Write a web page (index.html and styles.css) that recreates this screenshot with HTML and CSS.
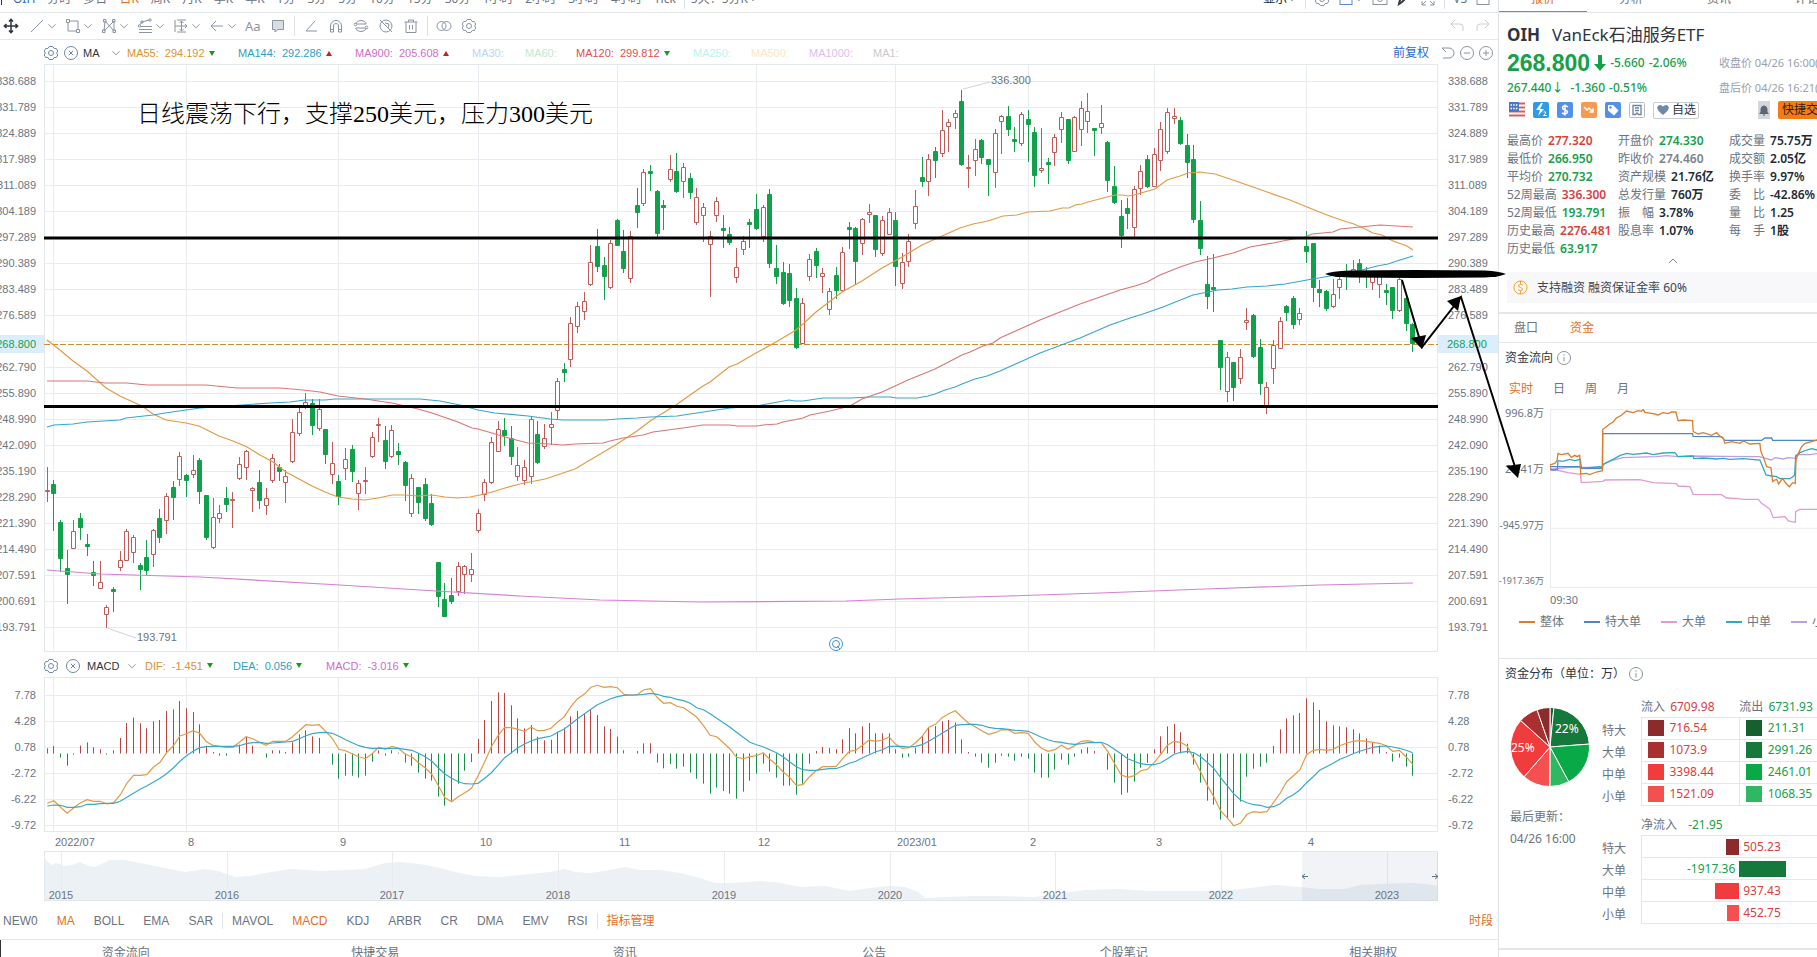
FILE: index.html
```html
<!DOCTYPE html>
<html lang="zh-CN">
<head>
<meta charset="utf-8">
<title>OIH VanEck石油服务ETF</title>
<link rel="stylesheet" href="styles.css">
</head>
<body>
<svg class="defs" width="0" height="0" aria-hidden="true">
  <symbol id="chev" viewBox="0 0 10 10"><path d="M1.500 3.300 5 6.800 8.500 3.300"/></symbol>
  <symbol id="hex" viewBox="0 0 16 16"><path d="M6.200 1.500h3.600l1.400 2h2.100l1.400 2.500-1 2 1 2-1.400 2.500h-2.100l-1.400 2H6.200l-1.400-2H2.700L1.300 10l1-2-1-2 1.400-2.500h2.100z"/><circle cx="8" cy="8" r="2.500"/></symbol>
  <symbol id="close" viewBox="0 0 16 16"><circle cx="8" cy="8" r="6.500"/><path d="M5.800 5.800l4.400 4.400M10.200 5.800l-4.400 4.400"/></symbol>
  <symbol id="info" viewBox="0 0 16 16"><circle cx="8" cy="8" r="6.500"/><path d="M8 7v4.500M8 4.300v1.400"/></symbol>
</svg>
<div class="app">
<main class="main">
  <header class="topbar">
    <span class="edge"></span>
    <button class="sym">OIH</button><button>分时</button><button>多日</button><button class="on">日K</button><button>周K</button><button>月K</button><button>季K</button><button>年K</button><button>1分</button><button>3分</button><button>5分</button><button>10分</button><button>15分</button><button>30分</button><button>1小时</button><button>2小时</button><button>3小时</button><button>4小时</button><button>Tick</button><i class="sep"></i><button>5天：5分K <svg class="ic chev"><use href="#chev"/></svg></button>
    <div class="topright">
      <button class="dark">显示 <svg class="ic chev"><use href="#chev"/></svg></button><i class="sep"></i>
      <button aria-label="设置"><svg class="ic"><use href="#hex"/></svg></button>
      <button aria-label="布局"><svg class="ic blue" viewBox="0 0 16 16"><rect x="2" y="2" width="12" height="11.500"/></svg><svg class="ic chev"><use href="#chev"/></svg></button>
      <button aria-label="截图"><svg class="ic" viewBox="0 0 16 16"><rect x="1" y="3" width="14" height="10.500"/><circle cx="8" cy="8" r="2.500"/></svg></button>
      <button aria-label="画线"><svg class="ic inkic" viewBox="0 0 16 16"><path d="M3 13l1-4 7-7 2 2-7 7z"/></svg></button>
      <button aria-label="全屏"><svg class="ic" viewBox="0 0 16 16"><path d="M2 6V2h4M10 2h4v4M2 10v4h4M2 14l4-4M14 10v4h-4M14 14l-4-4"/></svg></button><i class="sep"></i>
      <button>VS</button>
      <button aria-label="侧栏"><svg class="ic" viewBox="0 0 16 16"><rect x="2" y="2" width="12" height="11.500"/><path d="M9 2v5h5"/></svg></button>
    </div>
  </header>

  <nav class="tools" aria-label="画图工具">
    <button aria-label="移动"><svg class="ic move" viewBox="0 0 16 16"><path d="M8 1.500v13M1.500 8h13M6 3.500l2-2.200 2 2.200M6 12.500l2 2.200 2-2.200M3.500 6 1.300 8l2.200 2M12.500 6l2.200 2-2.200 2"/></svg></button>
    <div class="pairs">
      <button aria-label="直线"><svg class="ic" viewBox="0 0 16 16"><path d="M2 14 14 2"/></svg><svg class="ic chev"><use href="#chev"/></svg></button>
      <button aria-label="矩形"><svg class="ic" viewBox="0 0 16 16"><path d="M4.500 3h8.500v8.500M11.500 13H3V4.500"/><path d="M1.500 1.500h3v3h-3zM11.500 11.500h3v3h-3z"/></svg><svg class="ic chev"><use href="#chev"/></svg></button>
      <button aria-label="形态"><svg class="ic" viewBox="0 0 16 16"><path d="M3 13 4 3l9 10V3L3 13"/><path d="M1.500 12h2.500v2.500H1.500zM2.500 1.500H5V4H2.500zM11.500 1.500H14V4h-2.500zM12 12h2.500v2.500H12z"/></svg><svg class="ic chev"><use href="#chev"/></svg></button>
      <button aria-label="斐波那契"><svg class="ic" viewBox="0 0 16 16"><path d="M2 14.500h13M2 11.500h13M4 8.500h11M2.500 7 5 4l7-2"/><circle cx="2.500" cy="8" r="1.200"/><circle cx="5" cy="4" r="1.200"/><circle cx="13" cy="2" r="1.200"/></svg><svg class="ic chev"><use href="#chev"/></svg></button>
      <button aria-label="区间"><svg class="ic" viewBox="0 0 16 16"><path d="M2 2v12M4 2h9M4 14h9M8.500 3v10M2 8h12M6.500 5l2-2 2 2M6.500 11l2 2 2-2M12 6l2 2-2 2"/></svg><svg class="ic chev"><use href="#chev"/></svg></button>
      <button aria-label="箭头"><svg class="ic" viewBox="0 0 16 16"><path d="M14 8H2M7 3 2 8l5 5"/></svg><svg class="ic chev"><use href="#chev"/></svg></button>
    </div>
    <div class="singles">
      <button class="aa">Aa</button>
      <button aria-label="批注"><svg class="ic fill" viewBox="0 0 16 16"><path d="M2.500 2.500h11v9H8L5 14v-2.500H2.500z"/></svg></button>
      <i class="sep"></i>
      <button aria-label="角度"><svg class="ic" viewBox="0 0 16 16"><path d="M12 3 3 13h11"/></svg></button>
      <button aria-label="磁铁"><svg class="ic" viewBox="0 0 16 16"><path d="M2.500 14V8a5.500 5.500 0 0 1 11 0v6h-3V8a2.500 2.500 0 0 0-5 0v6zM2.500 11.500h3M10.500 11.500h3"/></svg></button>
      <button aria-label="连续画线"><svg class="ic" viewBox="0 0 16 16"><path d="M2.500 6a6 6 0 0 1 11 0M2.500 10a6 6 0 0 0 11 0"/><path d="M4 6h9M3 10h9"/><circle cx="2.500" cy="6.500" r="1.300"/><circle cx="13.500" cy="9.500" r="1.300"/></svg></button>
      <button aria-label="隐藏"><svg class="ic" viewBox="0 0 16 16"><circle cx="8" cy="8" r="6"/><path d="M2 2l12 12M7 5l4 1-1 4"/></svg></button>
      <button aria-label="删除"><svg class="ic" viewBox="0 0 16 16"><path d="M1.500 4h13M5.500 4V2h5v2M3 4v10.500h10V4M6.500 7v4.500M9.500 7v4.500"/></svg></button>
      <i class="sep"></i>
      <button aria-label="叠加"><svg class="ic" viewBox="0 0 16 16"><circle cx="5.500" cy="8" r="4.500"/><circle cx="10.500" cy="8" r="4.500"/></svg></button>
      <button aria-label="画图设置"><svg class="ic"><use href="#hex"/></svg></button>
    </div>
    <div class="undo">
      <button aria-label="撤销"><svg class="ic" viewBox="0 0 16 16"><path d="M6 2 2 6l4 4M2 6h9q3 0 3 3v4"/></svg></button>
      <button aria-label="重做"><svg class="ic" viewBox="0 0 16 16"><path d="M10 2l4 4-4 4M14 6H5Q2 6 2 9v4"/></svg></button>
    </div>
  </nav>

  <section class="legend ma">
    <div class="who"><svg class="ic"><use href="#hex"/></svg><svg class="ic"><use href="#close"/></svg><span>MA</span><svg class="ic chev"><use href="#chev"/></svg></div>
    <span class="c55">MA55:<b>294.192</b><i class="dn"></i></span><span class="c144">MA144:<b>292.286</b><i class="up"></i></span><span class="c900">MA900:<b>205.608</b><i class="up"></i></span><span class="c30">MA30:</span><span class="c60">MA60:</span><span class="c120">MA120:<b>299.812</b><i class="dn"></i></span><span class="c250">MA250:</span><span class="c500">MA500:</span><span class="c1000">MA1000:</span><span class="c1">MA1:</span>
    <div class="adj"><button class="link">前复权</button><button aria-label="重置"><svg class="ic" viewBox="0 0 16 16"><path d="M2 3h7a5 5 0 0 1 0 10H3M2 3l4 4"/></svg></button><button aria-label="缩小"><svg class="ic" viewBox="0 0 16 16"><circle cx="8" cy="8" r="6.500"/><path d="M5 8h6"/></svg></button><button aria-label="放大"><svg class="ic" viewBox="0 0 16 16"><circle cx="8" cy="8" r="6.500"/><path d="M5 8h6M8 5v6"/></svg></button></div>
  </section>

  <section class="row price">
    <ul class="axis left" data-axis="price"></ul>
    <div class="pane">
      <svg id="price" viewBox="44 64 1394 588" preserveAspectRatio="none"></svg>
      <p class="note">日线震荡下行，支撑250美元，压力300美元</p>
    </div>
    <ul class="axis right" data-axis="price"></ul>
    <span class="tag tl">268.800</span><span class="tag tr">268.800</span>
  </section>

  <section class="legend macd">
    <div class="who"><svg class="ic"><use href="#hex"/></svg><svg class="ic"><use href="#close"/></svg><span>MACD</span><svg class="ic chev"><use href="#chev"/></svg></div>
    <span class="c55">DIF:<b>-1.451</b><i class="dn"></i></span><span class="c144">DEA:<b>0.056</b><i class="dn"></i></span><span class="c900">MACD:<b>-3.016</b><i class="dn"></i></span>
  </section>

  <section class="row osc">
    <ul class="axis left" data-axis="macd"></ul>
    <div class="pane"><svg id="macd" viewBox="44 677 1394 155" preserveAspectRatio="none"></svg></div>
    <ul class="axis right" data-axis="macd"></ul>
  </section>

  <section class="row nav">
    <svg id="nav" viewBox="44 832 1394 69" preserveAspectRatio="none"></svg>
  </section>

  <nav class="indicators" aria-label="指标">
    <button>NEW0</button><button class="on">MA</button><button>BOLL</button><button>EMA</button><button>SAR</button><i class="sep"></i><button>MAVOL</button><button class="on">MACD</button><button>KDJ</button><button>ARBR</button><button>CR</button><button>DMA</button><button>EMV</button><button>RSI</button><i class="sep"></i><button class="on">指标管理</button><button class="on session">时段</button>
  </nav>
  <nav class="bottom"><button>资金流向</button><button>快捷交易</button><button>资讯</button><button>公告</button><button>个股笔记</button><button>相关期权</button></nav>
</main>

<aside class="side">
  <nav class="sidetabs"><button class="on">报价</button><button>分析</button><button>资讯</button><button>评论</button></nav>
  <section class="quote">
    <h1><b>OIH</b><span>VanEck石油服务ETF</span></h1>
    <div class="last g"><b>268.800</b><svg viewBox="0 0 12 16" width="12" height="16"><path d="M4 0h4v9h4l-6 7-6-7h4z"/></svg><span>-5.660</span><span>-2.06%</span><em>收盘价 04/26 16:00(美东)</em></div>
    <div class="after g"><span class="p">267.440↓</span><span>-1.360</span><span>-0.51%</span><em>盘后价 04/26 16:21(美东)</em></div>
    <div class="badges">
      <svg viewBox="0 0 16 16"><rect width="16" height="16" fill="#fff"/><path d="M0 1.500h16M0 5.500h16M0 9.500h16M0 13.500h16" stroke="#d8605c" stroke-width="2"/><rect width="10" height="10" fill="#4a78c8"/><path d="M1.500 3h7M1.500 6.500h7" stroke="#fff" stroke-width="1.500" stroke-dasharray="1.500 1.200"/></svg>
      <svg viewBox="0 0 16 16"><rect width="16" height="16" rx="2" fill="#2e9be8"/><path d="M8 1 3 8h4l-2 6 6-7H7l3-6z" fill="#fff"/><path d="M10.500 10q3-1 2 1.500l-2 2h3.500" fill="none" stroke="#fff"/></svg>
      <svg viewBox="0 0 16 16"><rect width="16" height="16" rx="2" fill="#5590e8"/><path d="M11 5Q8 3 6 4.500 4.500 7 8 8q3.500 1 2 3-2 1.700-5 0M8 2.500v11" fill="none" stroke="#fff" stroke-width="1.500"/></svg>
      <svg viewBox="0 0 16 16"><rect width="16" height="16" rx="2" fill="#f69a50"/><path d="M3 5l3 3 2-2 4 4M12 6.500V10H8.500" fill="none" stroke="#fff" stroke-width="1.500"/></svg>
      <svg viewBox="0 0 16 16"><rect width="16" height="16" rx="2" fill="#5590e8"/><path d="M3 3h5l5.500 5.500-4.500 5L3 8.500z" fill="#fff"/><circle cx="5.500" cy="5.500" r="1.200" fill="#5590e8"/></svg>
      <svg viewBox="0 0 16 16"><rect x=".5" y=".5" width="15" height="15" rx="1" fill="#fff" stroke="#b4bcc8"/><path d="M4 3.500h8v9H9.500L8 11l-1.500 1.500H4zM6 6h4M6 8.500h4" fill="none" stroke="#6f819b" stroke-width="1.300"/></svg>
      <button class="fav"><svg viewBox="0 0 12 12"><path d="M6 11Q-1.500 5.500.7 2.300 3.300-.4 6 2.600 8.700-.4 11.300 2.300 13.500 5.500 6 11z" fill="#6f88a6"/></svg>自选</button>
      <button class="bell" aria-label="提醒"><svg viewBox="0 0 12 12"><path d="M6 .5v1Q9.500 2 9.500 6v2l1.500 2H1l1.500-2V6Q2.500 2 6 1.500zM4.500 10.500h3L6 12z" fill="#5c6675"/></svg></button>
      <button class="trade">快捷交易</button>
    </div>
    <div class="stats">
      <dl><div><dt>最高价</dt><dd class="r">277.320</dd></div><div><dt>最低价</dt><dd class="g">266.950</dd></div><div><dt>平均价</dt><dd class="g">270.732</dd></div><div><dt>52周最高</dt><dd class="r">336.300</dd></div><div><dt>52周最低</dt><dd class="g">193.791</dd></div><div><dt>历史最高</dt><dd class="r">2276.481</dd></div><div><dt>历史最低</dt><dd class="g">63.917</dd></div></dl>
      <dl><div><dt>开盘价</dt><dd class="g">274.330</dd></div><div><dt>昨收价</dt><dd class="n">274.460</dd></div><div><dt>资产规模</dt><dd>21.76亿</dd></div><div><dt>总发行量</dt><dd>760万</dd></div><div><dt>振　幅</dt><dd>3.78%</dd></div><div><dt>股息率</dt><dd>1.07%</dd></div></dl>
      <dl><div><dt>成交量</dt><dd>75.75万</dd></div><div><dt>成交额</dt><dd>2.05亿</dd></div><div><dt>换手率</dt><dd>9.97%</dd></div><div><dt>委　比</dt><dd>-42.86%</dd></div><div><dt>量　比</dt><dd>1.25</dd></div><div><dt>每　手</dt><dd>1股</dd></div></dl>
    </div>
    <button class="fold" aria-label="收起"><svg viewBox="0 0 10 6" width="10" height="6"><path d="M1 5l4-4 4 4"/></svg></button>
    <p class="margin"><svg viewBox="0 0 16 16" width="15" height="15"><circle cx="8" cy="8" r="7"/><path d="M10.500 5.500Q8 4 6 5.500 5.500 7.500 8 8q3 .7 2 2.500-2 1.500-4.500 0M8 1v3.500M8 11.500V15"/></svg>支持融资 融资保证金率 60%</p>
  </section>
  <nav class="subtabs"><button>盘口</button><button class="on">资金</button></nav>
  <section class="flow">
    <h2>资金流向<svg class="ic"><use href="#info"/></svg></h2>
    <div class="periods"><button class="on">实时</button><button>日</button><button>周</button><button>月</button></div>
    <div class="flowchart">
      <ul><li>996.8万</li><li>28.41万</li><li class="small">-945.97万</li><li class="tiny">-1917.36万</li></ul>
      <svg viewBox="181 207 800 537" preserveAspectRatio="none">
        <path class="fg" d="M181 208H981M181 387H981M181 565H981M181 742H981M182 208V742"/>
        <polyline stroke="#e39ad2" points="181,392 200,390 235,398 272,403 275,428 340,424 345,420 450,419 490,428 560,431 565,438 600,440 610,463 695,464 710,474 745,476 760,478 805,478 815,490 830,500 840,508 850,533 885,530 895,543 916,547 917,515 930,508 981,508"/>
        <polyline stroke="#bb9fe6" points="181,388 235,382 330,382 338,380 340,373 370,360 400,353 420,352 500,350 530,347 565,350 600,348 700,349 810,350 820,354 845,360 855,353 880,357 895,353 916,355 917,345 940,343 960,344 981,341"/>
        <polyline stroke="#2fa9c0" points="181,386 190,390 203,388 205,362 220,364 240,358 255,362 272,358 275,385 330,380 338,383 339,375 350,368 370,358 390,347 410,340 430,343 470,339 490,344 520,339 555,338 565,350 610,348 612,356 640,354 680,357 700,355 720,358 760,356 810,360 820,385 828,405 845,408 860,410 870,416 900,416 914,406 917,350 930,338 950,330 965,326 981,330"/>
        <polyline stroke="#4b88c8" points="181,380 275,380 275,385 338,385 339,281 608,281 610,289 695,290 705,301 815,301 825,294 845,294 848,301 981,301"/>
        <polyline stroke="#dd7d2c" points="181,388 181,375 195,370 202,362 205,340 215,344 235,340 245,352 255,346 262,350 270,346 273,402 290,400 300,404 320,396 338,392 339,268 350,260 360,252 370,246 380,234 395,226 410,213 430,218 445,212 455,214 460,208 465,217 490,221 505,225 520,218 535,221 545,216 558,216 565,242 580,240 608,242 610,275 625,282 640,278 665,286 680,278 692,290 700,294 705,310 725,305 750,310 760,303 780,312 810,310 812,330 817,345 820,350 830,380 843,383 848,425 855,420 860,418 866,432 878,415 885,426 890,432 898,440 908,428 916,430 918,360 925,340 935,320 945,310 960,306 970,303 981,300"/>
      </svg>
    </div>
    <p class="time">09:30</p>
    <ul class="flowkey"><li class="k1">整体</li><li class="k2">特大单</li><li class="k3">大单</li><li class="k4">中单</li><li class="k5">小单</li></ul>
  </section>
  <section class="dist">
    <h2>资金分布（单位：万）<svg class="ic"><use href="#info"/></svg></h2>
    <div class="distbody">
      <div class="pie"><svg id="pie" viewBox="-40 -40 80 80" width="80" height="80"></svg><p>最后更新：<br>04/26 16:00</p></div>
      <div class="tables">
        <table>
          <thead><tr><td></td><th>流入 <span class="r">6709.98</span></th><th>流出 <span class="g">6731.93</span></th></tr></thead>
          <tbody>
            <tr><th>特大</th><td class="r"><i class="s1"></i>716.54</td><td class="g"><i class="s5"></i>211.31</td></tr>
            <tr><th>大单</th><td class="r"><i class="s2"></i>1073.9</td><td class="g"><i class="s6"></i>2991.26</td></tr>
            <tr><th>中单</th><td class="r"><i class="s3"></i>3398.44</td><td class="g"><i class="s7"></i>2461.01</td></tr>
            <tr><th>小单</th><td class="r"><i class="s4"></i>1521.09</td><td class="g"><i class="s8"></i>1068.35</td></tr>
          </tbody>
        </table>
        <table class="net">
          <thead><tr><td></td><th colspan="2">净流入 <span class="g">-21.95</span></th></tr></thead>
          <tbody>
            <tr><th>特大</th><td class="neg"><i class="s1" style="width:13px"></i></td><td class="r pos">505.23</td></tr>
            <tr><th>大单</th><td class="neg g"><span>-1917.36</span></td><td class="bar"><i class="s6" style="width:47px"></i></td></tr>
            <tr><th>中单</th><td class="neg"><i class="s3" style="width:24px"></i></td><td class="r pos">937.43</td></tr>
            <tr><th>小单</th><td class="neg"><i class="s4" style="width:12px"></i></td><td class="r pos">452.75</td></tr>
          </tbody>
        </table>
      </div>
    </div>
  </section>
</aside>
<svg class="ink" viewBox="0 0 1817 957" preserveAspectRatio="none" aria-hidden="true">
  <path d="M1325 274Q1331 271 1350 270.500L1415 270 1485 270.500Q1499 271 1506 274 1499 277 1485 277.500L1415 278 1350 277.500Q1331 277 1325 274z"/>
  <path class="l" d="M1402 280 1422 347 1461 297 1516 470"/>
  <path d="M1422 349 1411 338 1426 335zM1461 296 1458 311 1447 301zM1518 478 1506 466 1521 464z"/>
</svg>
</div>
<script src="chart.js"></script>
</body>
</html>
```
FILE: styles.css
```css
*{box-sizing:border-box}
body{margin:0;background:#fff;color:#6b7480;font:12px/18px "Noto Sans","Noto Sans CJK SC",sans-serif;overflow:hidden}
button{all:unset;box-sizing:border-box;cursor:pointer;display:inline-flex;align-items:center;white-space:nowrap}
ul,dl,dd,p,h1,h2{margin:0;padding:0;list-style:none}
.defs{position:absolute}
.app{position:relative;display:flex;height:100vh;overflow:hidden}
.main{flex:1;min-width:0;display:flex;flex-direction:column}
.ic{width:16px;height:16px;flex:none;fill:none;stroke:#8a94a3;stroke-width:1}
.ic.chev{width:10px;height:10px}
.ic.blue{stroke:#5b87c4}
.ic.inkic{stroke:#333a45;stroke-width:2}
.on{color:#e0701e}
.r{color:#d9403c}
.g{color:#16a04a}
.sep{flex:none;width:1px;height:16px;background:#dfe2e7}

.topbar{display:flex;flex:none;align-items:center;gap:12px;height:27px;margin-top:-14px;border-bottom:1px solid #e3e6ea;padding-right:7px}
.edge{width:1px;height:12px;margin-left:1px;margin-right:-13px;background:#333}
.topbar .sym{color:#2b6cc4;margin-left:12px}
.topbar .sep{height:20px;margin:0 -6px 0 -4px}
.topright{display:flex;align-items:center;gap:8px;margin-left:auto}
.topright .sep{margin:0}
.dark{color:#222a35}

.tools{display:flex;flex:none;align-items:center;height:27px;padding:0 7px 0 3px;border-bottom:1px solid #e3e6ea}
.move{stroke:#2d3540;stroke-width:1.5}
.pairs{display:flex;gap:8px;margin:0 8px 0 10px}
.pairs button{gap:2px}
.singles{display:flex;align-items:center;gap:9px}
.singles .sep{height:20px;margin:0 -1px}
.aa{width:16px;font-size:13px;color:#8a94a3}
.fill path{fill:#d8dde3}
.undo{display:flex;gap:10px;margin-left:auto}
.undo .ic{stroke:#c9ced5}

.legend{display:flex;flex:none;align-items:center;height:24px;padding-top:2px;font:11px/16px "Liberation Sans","Noto Sans CJK SC",sans-serif}
.who{display:flex;align-items:center;color:#2d3540;flex:none;padding-left:43px}
.who .ic{stroke:#6f88a6}
.ma .who{width:127px;gap:4px}
.macd .who{width:145px;gap:6px}
.ma .who span{width:24px}
.macd .who span{width:34px}
.who .ic.chev{stroke:#8a94a3}
.legend>span{flex:none;display:flex;align-items:center}
.legend b{font-weight:400;margin-left:6px}
.up,.dn{margin-left:4px;border:3px solid transparent}
.dn{border-top:5px solid #1a9a1a;border-bottom:0}
.up{border-bottom:5px solid #c81e1e;border-top:0}
.c55{color:#e09033;width:111px}
.c144{color:#2d9fc4;width:117px}
.c900{color:#d06ccc;width:117px}
.c30{color:#bcd4f2;width:53px}
.c60{color:#bfe8d2;width:51px}
.c120{color:#e0504c;width:117px}
.c250{color:#baf3ee;width:58px}
.c500{color:#fbe8c4;width:58px}
.c1000{color:#dcc0ec;width:64px}
.c1{color:#c6c9ce}
.macd{height:25px}
.macd .c55{width:88px}
.macd .c144{width:93px}
.adj{display:flex;align-items:center;gap:3px;margin-left:auto;padding-right:4px}
.adj .link{color:#1f6cc9;font-size:12px;margin-right:8px}

.row{display:grid;grid-template:minmax(0,1fr)/44px minmax(0,1fr) 60px;flex:none;position:relative}
.row svg{display:block;width:100%;height:100%}
.price{height:588px}
.osc{height:155px}
.nav{height:69px}
.nav svg{grid-column:2}
.pane{position:relative;min-height:0}
.axis{font:11px/26px "Liberation Sans",sans-serif;color:#6b7480;padding-top:4px}
.axis li{display:flex;height:26px}
.left li{justify-content:flex-end;padding-right:8px}
.right li{padding-left:10px}
.osc .axis{padding-top:5px}
.tag{position:absolute;top:271px;height:18px;background:#dceefc;color:#12a050;font:11px/18px "Liberation Sans",sans-serif;display:flex}
.tl{left:0;width:44px;justify-content:flex-end;padding-right:8px}
.tr{right:0;width:60px;padding-left:9px}
.note{position:absolute;left:93px;top:33px;font:300 24px/34px "Liberation Serif","Noto Sans CJK SC",serif;color:#000;white-space:nowrap}
.grid{stroke:#e8ecf0;fill:none}
.frame{stroke:#e3e8ec;fill:none}
.cr{stroke:#c05a58;fill:#fff}
.cg{stroke:#12a14b;fill:#12a14b}
.line{fill:none;stroke-width:1.2}
svg text{font:11px "Liberation Sans",sans-serif;fill:#6b7480}
.key{fill:none;stroke:#000;stroke-width:3}

.indicators{display:flex;flex:none;align-items:center;gap:19px;height:39px;padding:2px 5px 0 3px;border-bottom:1px solid #e3e6ea;font-family:"Liberation Sans","Noto Sans CJK SC",sans-serif}
.indicators .sep{height:16px;margin:0 -10px}
.session{margin-left:auto}
.bottom{display:grid;grid-template-columns:repeat(6,1fr);flex:none;height:26px;border-left:1px solid #333}
.bottom button{justify-content:center}

.side{flex:none;width:319px;border-left:1px solid #dfe2e7;overflow:hidden;white-space:nowrap}
.sidetabs{display:flex;height:27px;margin-top:-14px;border-bottom:1px solid #e3e6ea}
.sidetabs button{flex:none;width:88px;justify-content:center}
.sidetabs .on{border-bottom:1px solid #e0701e}
.quote{padding-left:8px;border-bottom:2px solid #e4e6ec}
h1{display:flex;align-items:center;gap:12px;height:28px;margin-top:8px;font-size:17px;color:#2d3540;font-weight:400}
.last,.after{display:flex;align-items:center;font-weight:500;gap:4px}
.last{height:28px}
.last b{font:700 23px/28px "Liberation Sans",sans-serif}
.last svg{fill:#16a04a}
.after{height:22px}
.after .p{margin-right:3px}
.quote em{position:absolute;left:calc(100% - 98px);font-size:11px;font-style:normal;font-weight:400;color:#98a1ad}
.badges{display:flex;align-items:center;gap:8px;height:22px;padding-left:2px}
.badges svg{width:16px;height:16px;flex:none}
.fav{height:17px;padding:0 2px 0 3px;gap:3px;border:1px solid #c8cdd5;border-radius:2px;color:#2d3540}
.badges .fav svg{width:12px;height:12px}
.bell{width:18px;height:18px;justify-content:center;background:#d4d7dc;margin-left:51px}
.badges .bell svg{width:12px;height:12px}
.trade{flex:none;height:18px;padding:0 4px;background:#f57c14;color:#2d2010;border-radius:2px}
.stats{display:grid;grid-template-columns:111px 111px 111px;margin-top:11px}
.stats dl>div{display:flex;gap:5px;height:18px}
dd{font-weight:600;color:#222a35}
dd.r{color:#d9403c}
dd.g{color:#16a04a}
dd.n{color:#7a828e}
.fold{display:flex;justify-content:center;width:332px;height:14px;align-items:flex-start}
.fold svg{fill:none;stroke:#7a8899}
.margin{display:flex;align-items:center;gap:9px;height:31px;padding-left:6px;margin-bottom:9px;background:#f8f8fa;color:#3c4450}
.margin svg{fill:none;stroke:#f0a020}
.subtabs{display:flex;gap:32px;height:29px;padding-left:15px;border-bottom:1px solid #e3e6ea}
h2{display:flex;align-items:center;gap:3px;height:30px;padding-left:6px;font-size:12px;font-weight:400;color:#2d3540}
.periods{display:flex;gap:20px;padding-left:10px;margin:7px 0 11px}
.flowchart{display:grid;grid-template-columns:51px minmax(0,1fr)}
.flowchart ul{margin:-6px 0 0;font-size:11px}
.flowchart li{display:flex;justify-content:flex-end;height:20px;margin-bottom:36px;padding-right:6px;align-items:center}
.flowchart li:last-child{margin:0}
.small{font-size:10px}
.tiny{font-size:9px}
.flowchart svg{width:100%;height:179px}
.flowchart polyline,.fg{fill:none;vector-effect:non-scaling-stroke;stroke-width:1.3}
.fg{stroke:#e6e8ec;stroke-width:1}
.time{padding-left:51px;font-size:11px}
.flowkey{display:flex;gap:20px;margin-top:4px;padding:0 0 27px 20px}
.flowkey li{display:flex;align-items:center;gap:5px}
.flowkey li::before{content:"";width:16px;height:2px;background:currentColor}
.k1::before{color:#dd7d2c}.k2::before{color:#4b88c8}.k3::before{color:#e39ad2}.k4::before{color:#2fa9c0}.k5::before{color:#bb9fe6}
.dist{border-top:1px solid #e3e6ea;border-bottom:2px solid #e4e6ec;padding-bottom:24px}
.distbody{display:flex;padding-top:9px}
.pie{width:103px;flex:none;padding:9px 0 0 11px}
.pie svg{display:block}
.pie p{line-height:22px;margin-top:19px}
.pie text{fill:#fff;font:12px "Noto Sans",sans-serif}
table{border-collapse:collapse;table-layout:fixed;width:236px;line-height:16px}
table th,table td{padding:0;font-weight:400;text-align:left}
thead td,tbody th{width:39px}
thead th span{margin-left:2px}
tr{height:22px}
thead tr{height:19px}
tbody td{border:1px solid #e3e6ea}
tbody td i{display:inline-block;width:16px;height:16px;margin:0 6px;vertical-align:top}
tbody tr th{padding-top:5px}
.net{margin-top:9px}
.net thead tr{height:21px}
.net thead span{margin-left:8px}
.net .neg{text-align:right;border-right:0}
.net .neg span{padding-right:4px}
.net i{margin:0}
.net .pos{padding-left:4px}
.net .pos,.net .bar{border-left:0}
.s1{background:#8c2b2b}.s2{background:#a83030}.s3{background:#f03c3c}.s4{background:#f55050}
.s5{background:#15602f}.s6{background:#16793c}.s7{background:#08a946}.s8{background:#2fb862}
.ink{position:absolute;inset:0;width:100%;height:100%;pointer-events:none}
.ink .l{fill:none;stroke:#000;stroke-width:2}
```
FILE: chart.js
```js
// Candle rows: colour, high, body top, body bottom, low. Values are thirds of a unit below `base`.
const series = [
[320, `r,440,511,517,545 g,480,492,521,632 g,600,606,716,756 g,690,744,764,851 r,600,634,686,686 g,578,594,623,659 g,642,672,680,707 g,723,757,767,797 r,724,787,806,808 r,855,861,886,923
g,801,807,815,876 r,693,720,745,752 r,626,634,722,724 r,645,652,700,729 g,730,736,749,811 g,660,711,752,766 r,627,631,706,742 g,566,594,653,668 r,519,529,604,643 g,484,501,533,600
r,397,409,481,497 g,462,466,482,532 r,405,451,466,475 g,414,420,517,551 g,526,526,655,661 r,534,592,683,688 r,556,580,598,608 g,502,535,554,575 r,516,538,544,624 r,411,433,478,480
r,389,394,445,479 r,502,505,514,577 g,450,486,544,566 r,504,535,559,584 r,402,415,484,488 g,433,441,455,482 r,449,469,490,548 r,297,337,425,428 r,265,277,341,347 r,219,247,257,266
g,237,249,317,344 r,237,268,328,334 g,328,328,404,433 r,366,430,466,491 g,466,484,532,556 r,385,418,448,480 g,375,388,455,485 r,480,490,523,569 r,442,481,487,521 r,336,352,412,413
r,295,313,319,365 g,318,361,427,448 r,316,331,412,413 g,370,394,404,436 g,424,427,497,542 r,463,475,583,592 g,502,502,548,583 g,475,492,598,602 g,521,549,614,617 g,727,727,830,860
g,790,838,890,892 g,774,825,845,853 r,726,739,817,829 r,736,739,766,823 r,700,748,764,787 r,568,580,632,640 r,478,485,526,544 r,352,367,488,493 r,304,328,397,397 g,294,331,348,379
g,319,355,412,436 r,380,436,472,484`],
[130, `r,990,1012,1052,1066 r,857,868,1040,1062 g,873,912,998,1001 r,883,924,950,958 r,847,883,895,946 r,745,754,842,866 g,700,717,728,755 r,562,580,689,710
r,517,529,590,610 r,487,514,545,569 r,346,397,466,469 g,297,348,410,425 g,381,405,440,509 r,330,340,475,476 g,267,270,347,349 g,301,363,416,428 r,304,319,448,458 g,174,225,248,294
r,118,127,221,227 g,105,123,131,182 g,181,183,311,320 g,211,225,233,299 r,76,118,149,157 g,70,123,185,188 r,100,112,155,203 g,130,144,188,206 r,175,202,278,284 r,220,232,257,337
r,304,319,344,500 r,202,214,257,277 g,256,294,302,353 g,292,312,338,344 r,354,412,445,458 r,319,334,359,374 g,267,276,284,353 g,192,237,296,299 r,226,232,322,337 g,177,192,401,413
g,345,414,440,461 g,396,426,521,526 g,403,430,512,530 g,475,504,653,656 r,505,520,641,643 r,373,388,440,452 g,354,363,407,443 r,414,430,442,488 r,475,484,539,554 g,412,435,482,506
r,352,367,482,484 g,276,291,299,356 g,291,294,395,464 r,264,268,341,374 r,222,247,254,279 g,255,255,359,380 r,258,271,371,377 r,234,247,314,315 g,246,270,410,467 r,370,397,463,476
r,312,334,395,410 r,181,229,281,296`],
[60, `g,291,351,365,380 r,283,298,365,407 g,261,273,302,353 r,150,211,283,292 r,178,187,200,275 r,150,160,175,206 g,90,123,314,318 r,285,321,328,383
r,237,268,302,347 g,238,240,293,311 g,297,297,314,407 r,206,220,338,383 r,166,169,185,281 g,138,168,209,227 g,201,237,245,275 r,157,163,253,257 g,150,177,194,305 g,201,216,347,380
r,205,325,332,338 g,294,306,314,372 r,223,232,278,317 r,157,172,211,248 g,178,178,302,311 r,168,172,275,277 r,123,145,211,257 r,99,154,187,218 g,204,205,212,287 r,135,190,203,221
g,244,246,362,395 g,318,378,429,433 g,420,468,527,563 g,414,444,461,506 r,379,388,503,530 r,316,334,388,404 g,286,297,380,383 r,265,283,380,382 r,186,208,304,332 r,144,157,275,281
r,144,169,176,191 g,171,180,251,254 g,222,255,308,353 g,256,297,479,488 g,423,480,566,584`],
[200, `g,168,252,290,326 g,162,261,269,335 g,420,420,503,569 r,457,472,575,605 g,486,486,563,602
r,448,472,538,551 r,324,361,370,391 g,343,346,470,473 g,417,441,551,584 r,547,562,620,641 r,420,436,506,551 r,352,364,446,448 g,315,318,338,364 g,288,294,374,386 r,324,340,359,374
g,93,138,155,188 g,129,129,263,305 g,240,267,278,320 g,270,273,326,332 r,238,283,322,323 r,228,238,265,296 g,192,222,232,269 r,180,208,216,222 g,177,189,216,250 g,200,214,232,263
r,216,226,250,270 r,213,226,256,293 g,252,270,278,314 g,261,261,332,356 r,232,238,334,335 g,283,294,371,392 g,370,372,433,455`]
];
const averages = {
'#d581d3': '47,570 100,574 200,577 340,585 420,590 520,596 600,600 700,602 846,601 900,599 1008,596 1100,593 1205,589 1320,585 1413,583',
'#e29a45': '47,340 60,350 73,361 87,371 106,388 120,396 133,402 142,406 153,414 166,420 186,423 199,426 219,436 233,441 247,447 260,455 273,462 286,472 299,479 312,486 325,492 338,497 352,499 365,500 378,498 392,495 405,495 418,496 432,495 445,497 457,498 470,497 480,495 492,492 505,488 520,484 545,479 575,469 617,444 637,431 650,421 676,405 690,395 703,386 710,382 729,367 737,364 756,353 776,342 796,330 803,324 816,312 842,292 862,281 882,268 902,257 922,245 942,236 960,228 973,224 988,221 1003,216 1017,215 1028,212 1050,211 1062,208 1069,208 1075,205 1082,204 1088,202 1107,197 1115,195 1122,195 1128,196 1134,195 1155,189 1167,180 1180,176 1188,173 1200,172 1215,174 1230,179 1250,186 1270,193 1290,200 1307,207 1327,215 1347,222 1354,224 1363,228 1373,233 1382,235 1393,241 1407,246 1413,250',
'#38a5cf': '47,427 54,425 73,424 87,422 120,420 126,418 153,415 165,413 200,408 270,403 290,402 305,400 325,400 335,399 420,399 440,401 460,405 478,410 495,413 528,416 550,419 563,420 605,420 617,419 637,418 650,417 677,416 690,414 730,408 757,406 767,404 789,400 795,401 803,401 823,398 850,398 870,397 890,397 897,398 917,398 928,396 935,394 945,390 955,387 962,384 975,379 987,376 1000,371 1040,353 1080,338 1110,325 1130,318 1143,314 1163,307 1193,295 1218,290 1232,289 1247,287 1267,286 1285,284 1307,280 1330,276 1358,271 1377,266 1388,264 1400,260 1413,256',
'#d97775': '47,381 87,381 105,383 127,383 147,385 206,385 237,388 280,388 303,390 320,392 338,396 365,399 392,403 418,409 432,413 458,422 472,428 478,429 492,433 505,437 520,441 528,443 550,444 563,445 575,444 603,443 610,441 623,438 643,435 653,432 683,428 703,425 730,425 737,426 757,426 763,425 777,424 783,422 803,418 810,415 830,411 850,406 862,399 882,392 908,380 935,369 962,355 970,352 983,346 993,343 1000,338 1040,320 1080,304 1120,290 1135,286 1147,282 1160,275 1180,267 1195,262 1213,258 1233,253 1250,247 1273,243 1293,239 1303,238 1312,234 1333,232 1340,229 1360,227 1380,225 1413,227'
};
const hist = [325,318,353,377,344,317,307,322,328,344,331,294,249,233,250,265,244,240,213,208,183,205,216,253,317,336,347,347,340,314,290,317,340,353,331,331,336,307,283,271,289,294,340,374,416,407,407,413,407,365,331,347,331,338,368,377,398,416,422,470,497,482,431,392,366,297,240,183,157,159,196,235,265,255,290,301,299,275,263,229,213,222,208,225,259,267,290,331,340,333,310,310,368,385,372,386,380,398,416,431,461,443,453,461,476,455,422,401,371,395,413,437,437,464,431,371,333,321,324,328,298,264,280,259,249,280,280,280,328,353,350,323,289,262,258,244,240,247,298,336,350,368,383,368,347,350,362,350,356,398,413,413,389,359,374,350,328,322,333,341,389,428,464,458,425,383,368,328,289,259,252,277,311,374,428,482,494,539,536,533,485,410,386,380,368,318,268,235,226,219,175,187,210,244,256,259,262,268,280,295,307,317,336,365,353,380,407];
const dif = [490,482,502,520,503,488,479,484,484,492,488,465,430,406,406,404,382,367,338,318,288,281,272,280,305,316,319,322,322,307,290,296,307,316,304,304,304,290,272,254,256,254,274,295,328,332,341,350,356,341,322,328,319,325,343,350,368,383,402,437,473,485,470,458,445,407,365,320,287,262,263,268,274,262,272,271,265,246,230,200,176,163,142,136,142,140,143,163,166,164,149,146,172,190,188,199,203,217,232,257,286,290,308,327,352,356,350,347,338,358,374,395,412,436,434,410,392,380,380,380,356,334,331,316,300,304,300,291,313,325,323,308,289,262,253,233,221,212,232,250,260,272,283,278,269,270,280,278,280,307,325,334,329,316,328,317,304,302,307,308,335,370,404,412,407,392,388,368,343,316,304,307,319,357,395,436,470,512,533,557,550,523,515,517,515,488,460,425,407,389,344,331,328,331,328,317,310,304,302,304,307,310,317,334,331,350,373];
const dea = [498,495,496,502,502,500,493,493,491,490,490,484,472,460,448,438,427,415,401,384,364,347,334,323,320,319,319,319,319,317,311,308,307,310,309,307,306,304,296,287,281,278,277,280,289,299,308,317,322,325,325,325,325,325,328,331,340,350,363,384,402,415,425,431,432,430,415,398,376,353,338,323,312,303,296,292,288,277,267,252,236,222,208,194,185,176,170,166,165,165,163,160,163,169,172,178,182,190,203,209,221,235,248,262,277,292,307,314,320,329,338,350,365,380,389,391,391,388,386,386,379,370,364,353,344,335,329,319,319,319,321,319,314,304,292,280,268,256,254,253,253,256,262,265,266,268,271,272,274,283,292,299,305,307,311,313,311,308,308,307,314,328,341,356,364,371,374,374,368,356,343,337,334,338,350,367,385,412,437,461,479,488,494,496,502,500,491,475,464,449,428,410,390,380,370,358,350,341,334,328,322,319,318,321,325,331,338];
const months = [[53,'2022/07'],[186,'8'],[338,'9'],[478,'10'],[617,'11'],[756,'12'],[895,'2023/01'],[1028,'2'],[1154,'3'],[1306,'4']];
const overview = '44,901 44,856 46,860 48,862 52,865 56,863 64,866 72,865 80,862 88,866 95,867 110,860 125,860 145,864 165,868 185,872 205,869 218,871 235,877 250,876 265,873 290,869 320,871 350,870 365,869 375,866 385,863 400,862 420,864 440,868 455,872 475,876 500,877 530,874 550,872 565,869 575,872 590,873 610,870 625,867 640,870 660,870 680,873 700,878 715,883 730,883 760,881 775,882 800,887 825,886 850,891 870,888 890,886 905,887 918,892 925,898 945,897 970,896 1000,896 1035,897 1055,894 1085,890 1120,889 1150,891 1200,891 1230,890 1250,888 1275,885 1300,887 1320,889 1345,889 1360,885 1380,884 1410,883 1425,884 1438,886 1438,901';

const xAt = i => 47.3 + i * 6.628;
const el = id => document.getElementById(id);
const vlines = (a, b) => months.map(m => `M${m[0] + .5} ${a}V${b}`).join('');

// Price pane
let out = '<path class="grid" d="' + vlines(64, 652);
for (let k = 0; k < 22; k++) out += `M44 ${81.5 + 26 * k}H1438`;
out += '"/><rect class="frame" x="44.5" y="64.5" width="1393" height="587"/>';
out += '<path d="M44 344.500H1438" stroke="#cf8a35" stroke-dasharray="6 2"/>';
let i = 0;
for (const [base, rows] of series) for (const row of rows.trim().split(/\s+/)) {
  const [c, ...v] = row.split(',');
  const [h, t, b, l] = v.map(n => Math.round(base + n / 3));
  const x = Math.round(xAt(i++) - .5) + .5;
  out += `<path class="c${c}" d="M${x} ${h}V${t}M${x} ${b}V${l}M${x - 2} ${t + .5}H${x + 2}V${Math.max(b - .5, t + 1.5)}H${x - 2}z"/>`;
}
for (const c in averages) out += `<polyline class="line" stroke="${c}" points="${averages[c]}"/>`;
out += '<path class="key" d="M44 238H1438M44 406.500H1438"/>';
out += '<path d="M963 89 990 82M107 628 136 638" stroke="#cfd4da"/><text x="991" y="84">336.300</text><text x="137" y="641">193.791</text>';
out += '<g fill="none" stroke="#3f92dc"><circle cx="836" cy="644" r="6.500"/><circle cx="836" cy="644" r="3.500"/><path d="M837 646l3 3"/></g>';
el('price').innerHTML = out;

// MACD pane
out = '<path class="grid" d="' + vlines(677, 832);
for (let k = 0; k < 6; k++) out += `M44 ${695.5 + 26 * k}H1438`;
out += '"/><rect class="frame" x="44.5" y="677.5" width="1393" height="154"/>';
hist.forEach((v, n) => {
  const x = Math.round(xAt(n) - .5) + .5;
  if (v !== 340) out += `<path stroke="${v < 340 ? '#b94543' : '#1a8f4b'}" d="M${x} 753.500V${640 + v / 3}"/>`;
});
const trace = (a, c) => `<polyline class="line" stroke="${c}" points="${a.map((v, n) => xAt(n).toFixed(1) + ',' + (640 + v / 3).toFixed(1)).join(' ')}"/>`;
el('macd').innerHTML = out + trace(dif, '#e29a45') + trace(dea, '#38a9cb');

// Month labels and the history strip
out = months.map(m => `<text x="${m[0] + 2}" y="846">${m[1]}</text>`).join('');
out += `<polygon fill="#ecf1f5" points="${overview}"/><path class="grid" d="`;
for (let k = 0; k < 9; k++) out += `M${Math.round(61 + 165.7 * k) + .5} 852V901`;
out += '"/><rect class="frame" x="44.5" y="851.5" width="1393" height="49"/><rect x="1302" y="852" width="136" height="49" fill="#8a9bb5" opacity=".12"/>';
for (let k = 0; k < 9; k++) out += `<text text-anchor="middle" x="${Math.round(61 + 165.7 * k)}" y="899">${2015 + k}</text>`;
out += '<path fill="none" stroke="#5f7186" d="M1308 876.500h-6M1305 874l-3 2.500 3 2.500M1432 876.500h6M1435 874l3 2.500-3 2.500"/>';
el('nav').innerHTML = out;

// Value axes; the empty slot holds the current price tag
const ticks = {
  price: ['338.688', '331.789', '324.889', '317.989', '311.089', '304.189', '297.289', '290.389', '283.489', '276.589', '', '262.790', '255.890', '248.990', '242.090', '235.190', '228.290', '221.390', '214.490', '207.591', '200.691', '193.791'],
  macd: ['7.78', '4.28', '0.78', '-2.72', '-6.22', '-9.72']
};
document.querySelectorAll('[data-axis]').forEach(u => {
  u.innerHTML = ticks[u.dataset.axis].map(t => `<li>${t}</li>`).join('');
});

// Fund distribution
const parts = [[211.31, '#15602f'], [2991.26, '#16793c'], [2461.01, '#08a946'], [1068.35, '#2fb862'], [1521.09, '#f55050'], [3398.44, '#f03c3c'], [1073.9, '#a83030'], [716.54, '#8c2b2b']];
const total = parts.reduce((s, p) => s + p[0], 0);
let a = 0;
out = '';
for (const [v, c] of parts) {
  const b = a + v / total * 2 * Math.PI, p = t => `${(39.5 * Math.sin(t)).toFixed(2)} ${(-39.5 * Math.cos(t)).toFixed(2)}`;
  out += `<path d="M0 0L${p(a)}A39.500 39.500 0 0 1 ${p(b)}z" fill="${c}" stroke="#fff"/>`;
  a = b;
}
el('pie').innerHTML = out + '<text x="5" y="-14">22%</text><text x="-39" y="5">25%</text>';
```
